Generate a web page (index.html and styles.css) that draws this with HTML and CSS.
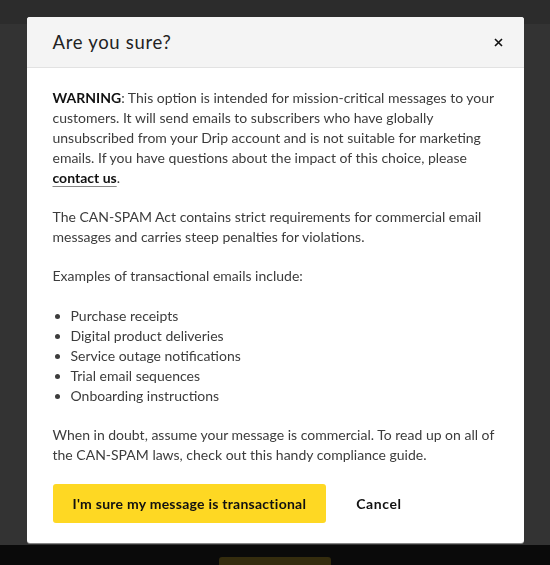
FILE: index.html
```html
<!DOCTYPE html>
<html lang="en">
<head>
  <meta charset="UTF-8">
  <meta name="viewport" content="width=device-width, initial-scale=1.0">
  <title>Are you sure?</title>
  <link rel="stylesheet" href="styles.css">
</head>
<body>
  <div class="page">
    <div class="topbar"></div>
    <div class="page-main"></div>
    <div class="footer-bar">
      <div class="footer-button"></div>
    </div>
  </div>

  <div class="overlay">
    <div class="modal">
      <div class="modal-header">
        <h2>Are you sure?</h2>
        <button class="close" aria-label="Close">
          <svg width="9" height="9" viewBox="0 0 9 9">
            <path d="M1 1 L8 8 M8 1 L1 8" stroke="#111" stroke-width="1.6" fill="none"/>
          </svg>
        </button>
      </div>
      <div class="modal-body">
        <p><strong>WARNING</strong>: This option is intended for mission-critical messages to your customers. It will send emails to subscribers who have globally unsubscribed from your Drip account and is not suitable for marketing emails. If you have questions about the impact of this choice, please <a href="#">contact us</a>.</p>
        <p>The CAN-SPAM Act contains strict requirements for commercial email messages and carries steep penalties for violations.</p>
        <p>Examples of transactional emails include:</p>
        <ul>
          <li>Purchase receipts</li>
          <li>Digital product deliveries</li>
          <li>Service outage notifications</li>
          <li>Trial email sequences</li>
          <li>Onboarding instructions</li>
        </ul>
        <p class="last">When in doubt, assume your message is commercial. To read up on all of the CAN-SPAM laws, check out this handy compliance guide.</p>
        <div class="actions">
          <button class="btn-primary">I'm sure my message is transactional</button>
          <button class="btn-link">Cancel</button>
        </div>
      </div>
    </div>
  </div>
</body>
</html>
```

FILE: styles.css
```css
body {
  margin: 0;
  font-family: Lato, "Noto Sans", sans-serif;
  background-color: #333333;
}
.page {
  height: 565px;
  display: flex;
  flex-direction: column;
  overflow: hidden;
}
.topbar {
  height: 24px;
  background-color: #2c2c2c;
}
.page-main {
  flex: 1;
  background-color: #333333;
}
.footer-bar {
  height: 20px;
  flex-shrink: 0;
  box-sizing: border-box;
  background-color: #0a0a0a;
  padding-top: 12px;
  display: flex;
  justify-content: center;
  overflow: hidden;
}
.footer-button {
  width: 112px;
  height: 30px;
  flex-shrink: 0;
  background-color: #342c0e;
  border-radius: 3px;
}
.overlay {
  position: fixed;
  top: 0;
  left: 0;
  right: 0;
  bottom: 0;
  display: flex;
  justify-content: center;
  align-items: flex-start;
  padding-top: 17px;
}
.modal {
  width: 497px;
  background-color: #ffffff;
  border-radius: 3px;
  overflow: hidden;
  box-shadow: 0 1px 0 rgba(170, 170, 170, 0.7);
}
.modal-header {
  height: 50px;
  background-color: #f4f4f4;
  border-bottom: 1px solid #e2e2e2;
  display: flex;
  align-items: center;
  justify-content: space-between;
  padding: 0 21px 0 26px;
}
.modal-header h2 {
  margin: 0;
  font-size: 18.5px;
  font-weight: 400;
  letter-spacing: 0.7px;
  color: #222;
}
.close {
  border: none;
  background: none;
  padding: 0;
  width: 9px;
  height: 9px;
  display: flex;
  cursor: pointer;
}
.modal-body {
  padding: 20px 26px 20px 26px;
  font-size: 14px;
  line-height: 20px;
  color: #3c3c3c;
}
.modal-body p {
  margin: 0 0 19px;
}
.modal-body p.last {
  margin-bottom: 19px;
}
.modal-body strong {
  color: #111;
  font-weight: 700;
}
.modal-body a {
  color: #111;
  font-weight: 700;
  text-decoration: underline;
  text-decoration-color: #888;
  text-underline-offset: 3px;
}
.modal-body ul {
  margin: 20px 0 19px;
  padding-left: 18px;
}
.actions {
  display: flex;
  align-items: center;
  gap: 10px;
}
.btn-primary {
  height: 39px;
  padding: 0 20px;
  border: none;
  border-radius: 3px;
  background-color: #fed823;
  color: #111;
  font-family: inherit;
  font-size: 14px;
  font-weight: 700;
  letter-spacing: 0.25px;
  cursor: pointer;
}
.btn-link {
  border: none;
  background: none;
  padding: 0 20px;
  color: #111;
  font-family: inherit;
  font-size: 14px;
  font-weight: 700;
  letter-spacing: 0.6px;
  cursor: pointer;
}
```
